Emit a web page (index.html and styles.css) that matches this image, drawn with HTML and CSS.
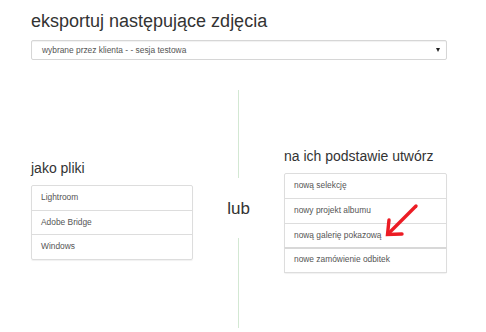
FILE: index.html
```html
<!DOCTYPE html>
<html lang="pl">
<head>
    <meta charset="UTF-8">
    <title>Eksport zdjęć</title>
    <link rel="stylesheet" href="styles.css">
</head>
<body>
    <div class="page">
        <h1 class="title">eksportuj następujące zdjęcia</h1>

        <div class="select">
            <span>wybrane przez klienta - - sesja testowa</span>
            <span class="caret"></span>
        </div>

        <div class="choices">
            <div class="col">
                <h4 class="col-title">jako pliki</h4>
                <ul class="list">
                    <li>Lightroom</li>
                    <li>Adobe Bridge</li>
                    <li>Windows</li>
                </ul>
            </div>

            <div class="divider">
                <div class="line line-top"></div>
                <div class="or">lub</div>
                <div class="line line-bottom"></div>
            </div>

            <div class="col">
                <h4 class="col-title">na ich podstawie utwórz</h4>
                <ul class="list list-create">
                    <li>nową selekcję</li>
                    <li>nowy projekt albumu</li>
                    <li>nową galerię pokazową</li>
                    <li class="split">nowe zamówienie odbitek</li>
                    <svg class="pointer" width="38" height="38" viewBox="0 0 38 38">
                        <path d="M33 4 L6 31" stroke="#ec1c24" stroke-width="3.4" stroke-linecap="round" fill="none"/>
                        <path d="M6 18 L4.5 32.5 L19 32" stroke="#ec1c24" stroke-width="3.4" stroke-linecap="round" stroke-linejoin="miter" fill="none"/>
                    </svg>
                </ul>
            </div>
        </div>
    </div>
</body>
</html>
```

FILE: styles.css
```css
body {
    margin: 0;
    background: #fff;
    font-family: "Liberation Sans", Arial, sans-serif;
    color: #333;
}
.page {
    width: 416px;
    padding: 10px 39px 0 31px;
}
.title {
    margin: 0;
    font-size: 18px;
    font-weight: normal;
    line-height: 22px;
    color: #333;
}
.select {
    margin-top: 8px;
    height: 18px;
    border: 1px solid #d6d6d6;
    border-radius: 2px;
    box-shadow: inset 0 1px 1px rgba(0, 0, 0, .06);
    padding: 0 6px 0 10px;
    display: flex;
    align-items: center;
    justify-content: space-between;
    font-size: 8.4px;
    color: #555;
}
.caret {
    width: 0;
    height: 0;
    border-left: 2.5px solid transparent;
    border-right: 2.5px solid transparent;
    border-top: 4px solid #222;
}
.choices {
    margin-top: 30px;
    display: grid;
    grid-template-columns: 162px 1fr 163px;
    align-items: center;
}
.col-title {
    margin: 0 0 7px;
    font-size: 14px;
    font-weight: normal;
    line-height: 20px;
    color: #333;
}
.list {
    list-style: none;
    margin: 0;
    padding: 0;
    position: relative;
    border-radius: 2px;
    box-shadow: 0 1px 1px rgba(0, 0, 0, .06);
}
.list li {
    border: 1px solid #ddd;
    margin-bottom: -1px;
    padding: 6px 9px;
    font-size: 8.4px;
    line-height: 11.7px;
    color: #555;
}
.list li:first-child {
    border-radius: 2px 2px 0 0;
}
.list li:last-child {
    margin-bottom: 0;
    border-radius: 0 0 2px 2px;
}
.list li.split {
    border-top: 2px solid #d8d8d8;
    padding-top: 5px;
}
.pointer {
    position: absolute;
    left: 99px;
    top: 29px;
}
.divider {
    display: flex;
    flex-direction: column;
    align-items: center;
}
.line {
    width: 1px;
    background: #d3e8d3;
}
.line-top {
    height: 88px;
}
.line-bottom {
    height: 90px;
}
.or {
    margin: 21px 0 19px;
    font-size: 17px;
    line-height: 20px;
    color: #333;
}
```
